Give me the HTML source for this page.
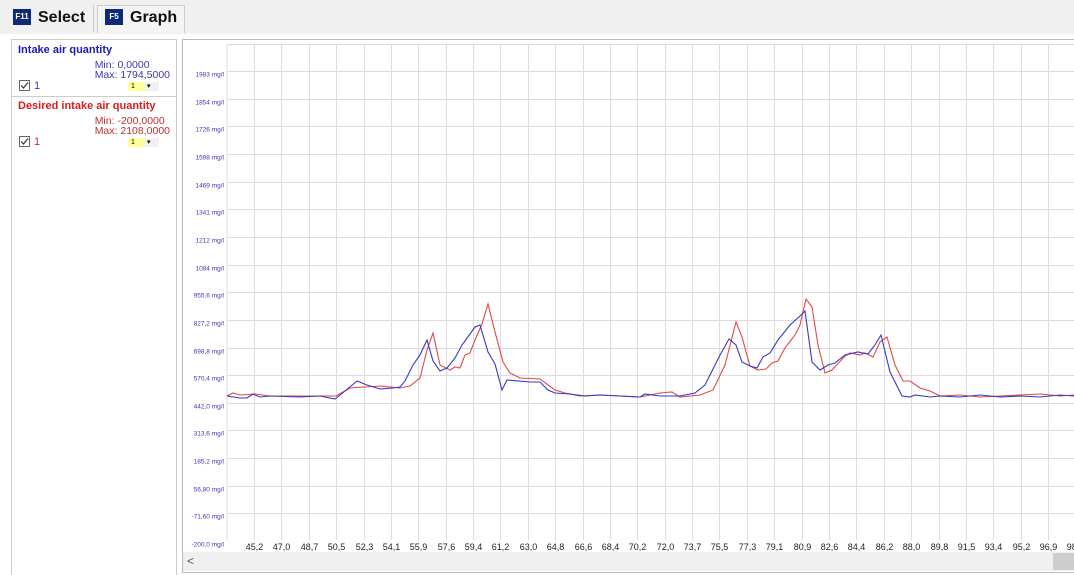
<!DOCTYPE html>
<html><head><meta charset="utf-8"><style>
*{margin:0;padding:0;box-sizing:border-box}
body{width:1074px;height:575px;overflow:hidden;background:#fff;font-family:"Liberation Sans",Arial,sans-serif;position:relative}
.bar{position:absolute;left:0;top:0;width:1074px;height:34px;background:#f0f0f0}
.key{position:absolute;background:#0c2a78;color:#fff;font-size:8px;font-weight:bold;text-align:center;line-height:16px;width:18px;height:16px}
.tab{position:absolute;font-size:16px;font-weight:bold;color:#111}
.abs{position:absolute}
.lp{position:absolute;left:11px;top:39px;width:166px;height:536px;border:1px solid #ccc;border-bottom:none}
.t{position:absolute;font-size:11px;font-weight:bold}
.mm{position:absolute;right:6px;font-size:10.5px;text-align:left;line-height:10px}
.cb{position:absolute;left:7px;width:11px;height:11px;border:1px solid #666;background:#fff}
.dd{position:absolute;left:116px;width:31px;height:9px;background:#f0f0f0;font-size:7px;line-height:9px}
.dd span{display:inline-block;width:17px;height:9px;background:#ffff99;padding-left:3px}
</style></head><body>
<div class="bar"></div>
<div class="key" style="left:13px;top:9px">F11</div>
<div class="tab" style="left:38px;top:9px">Select</div>
<div class="abs" style="left:93px;top:5px;width:1px;height:27px;background:#ccc"></div>
<div class="abs" style="left:97px;top:5px;width:88px;height:28px;border:1px solid #ccc;border-bottom:none;background:#f4f4f4"></div>
<div class="key" style="left:105px;top:9px">F5</div>
<div class="tab" style="left:130px;top:9px">Graph</div>

<div class="lp">
<div class="t" style="left:6px;top:4px;color:#1a1ab4">Intake air quantity</div>
<div class="mm" style="top:20px;color:#3a3ab0">Min: 0,0000<br>Max: 1794,5000</div>
<div class="cb" style="top:40px"><svg width="9" height="9" style="position:absolute;left:0;top:0"><path d="M1 4.5L3.5 7L8 1.5" stroke="#333" fill="none" stroke-width="1.2"/></svg></div>
<div class="abs" style="left:22px;top:40px;font-size:11px;color:#3a3ab0">1</div>
<div class="dd" style="top:42px"><span>1</span> ▾</div>
<div class="abs" style="left:0;top:56px;width:164px;height:1px;background:#ccc"></div>
<div class="t" style="left:6px;top:60px;color:#d42020">Desired intake air quantity</div>
<div class="mm" style="top:76px;color:#c03030">Min: -200,0000<br>Max: 2108,0000</div>
<div class="cb" style="top:96px"><svg width="9" height="9" style="position:absolute;left:0;top:0"><path d="M1 4.5L3.5 7L8 1.5" stroke="#333" fill="none" stroke-width="1.2"/></svg></div>
<div class="abs" style="left:22px;top:96px;font-size:11px;color:#c03030">1</div>
<div class="dd" style="top:98px"><span>1</span> ▾</div>
</div>

<div class="abs" style="left:182px;top:39px;width:893px;height:534px;border:1px solid #bbb;border-right:none"></div>
<div class="abs" style="left:183px;top:552px;width:891px;height:19px;background:#f0f0f0"></div>
<div class="abs" style="left:1053px;top:553px;width:21px;height:17px;background:#cdcdcd"></div>
<div class="abs" style="left:187px;top:554px;font-size:12px;color:#555">&lt;</div>

<svg class="abs" style="left:0;top:0" width="1074" height="575" font-family="Liberation Sans, Arial, sans-serif">
<g stroke="#dcdcdc" stroke-width="1">
<line x1="227" y1="44" x2="227" y2="540"/>
<line x1="227" y1="44.5" x2="1074" y2="44.5"/>
<g id="h">
</g>
</g>
<g stroke="#dcdcdc" stroke-width="1" id="grid"></g>
<g font-size="6.5" fill="#3a3ab0" text-anchor="end" id="yl"></g>
<g font-size="9" fill="#222" text-anchor="middle" id="xl"></g>
<polyline fill="none" stroke="#e04848" stroke-width="1.1" points="227,396 233,393 240,395 255,394 270,396 300,396 336,396 350,388 365,387 380,386 400,388 410,386 420,378 427,350 433,333 440,365 450,370 455,367 460,368 465,355 470,353 475,340 482,324 488,304 495,332 503,362 510,373 520,378 540,379 555,390 565,393 580,396 600,395 620,396 640,397 660,393 672,392 680,397 700,395 713,390 725,365 736,322 742,337 750,366 758,370 766,369 772,363 778,361 785,348 795,335 800,325 806,299 812,307 818,345 825,373 832,370 845,356 850,353 860,355 865,353 873,357 880,342 887,337 895,365 903,381 910,381 920,388 930,391 940,396 960,395 980,397 1000,396 1020,395 1040,394 1060,396 1074,395"/>
<polyline fill="none" stroke="#3838c8" stroke-width="1.1" points="227,396 240,398 247,398 253,394 260,397 270,396 300,397 320,396 335,399 345,391 357,381 367,385 380,389 393,388 400,387 405,381 413,365 420,355 427,340 433,361 440,371 447,368 455,358 462,345 475,327 480,325 488,352 495,364 502,390 507,380 530,382 540,382 548,390 555,393 570,394 585,396 600,395 620,396 640,397 645,394 660,396 680,396 695,393 705,385 720,355 729,339 736,345 742,362 750,366 757,368 763,357 770,353 778,340 790,325 800,316 805,311 812,362 820,370 828,365 835,363 845,355 858,352 868,354 875,345 881,335 890,372 902,396 910,397 915,395 930,397 940,396 960,397 980,395 1000,397 1020,396 1040,397 1060,395 1074,396"/>
</svg>
<script>
var ns="http://www.w3.org/2000/svg",g=document.getElementById('grid'),yl=document.getElementById('yl'),xl=document.getElementById('xl');
function el(p,t,a){var e=document.createElementNS(ns,t);for(var k in a)e.setAttribute(k,a[k]);p.appendChild(e);return e}
var ys=["1983 mg/l","1854 mg/l","1726 mg/l","1598 mg/l","1469 mg/l","1341 mg/l","1212 mg/l","1084 mg/l","955,6 mg/l","827,2 mg/l","698,8 mg/l","570,4 mg/l","442,0 mg/l","313,6 mg/l","185,2 mg/l","56,80 mg/l","-71,60 mg/l","-200,0 mg/l"];
for(var i=0;i<18;i++){var y=Math.round(71+i*27.65)+0.5;if(i<17)el(g,'line',{x1:227,y1:y,x2:1074,y2:y});var t=el(yl,'text',{x:224,y:y+5});t.textContent=ys[i];}
var xs="45,2 47,0 48,7 50,5 52,3 54,1 55,9 57,6 59,4 61,2 63,0 64,8 66,6 68,4 70,2 72,0 73,7 75,5 77,3 79,1 80,9 82,6 84,4 86,2 88,0 89,8 91,5 93,4 95,2 96,9 98,7".split(" ");
for(var j=0;j<xs.length;j++){var x=Math.round(254+j*27.38)+0.5;el(g,'line',{x1:x,y1:44,x2:x,y2:540});var t=el(xl,'text',{x:x,y:550});t.textContent=xs[j];}
</script>
</body></html>
